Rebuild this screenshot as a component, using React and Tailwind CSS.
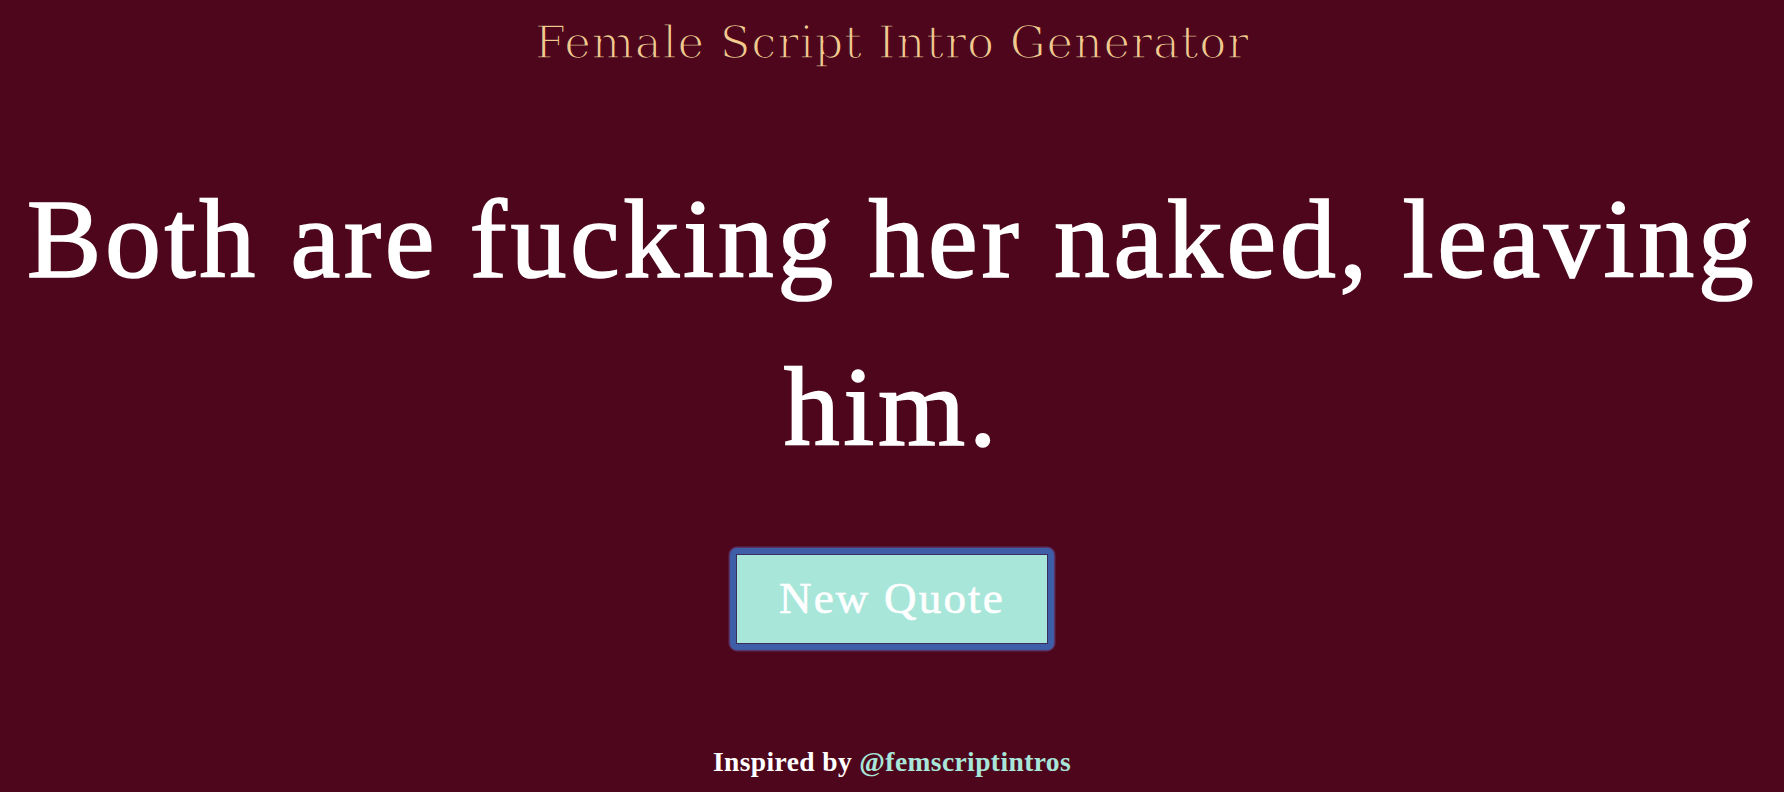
export default function App() {
    return (
        <div className="min-h-screen bg-[#4e061c] flex flex-col items-center text-center">
            {/* Title */}
            <h1 className="pt-[18px] text-[45px] leading-[50px] tracking-[0.7px] text-[#f3ca8e] font-['DejaVu_Serif',serif] [-webkit-text-stroke:1.5px_#4e061c]">
                Female Script Intro Generator
            </h1>

            {/* Quote */}
            <p className="mt-[87px] w-full text-[112px] leading-[168px] tracking-[3.6px] text-white font-['Liberation_Serif',serif] [-webkit-text-stroke:1.6px_white]">
                Both are fucking her naked, leaving him.
            </p>

            {/* Button with focus ring */}
            <div className="mt-[57px] rounded-[7px] bg-[#3f5ea8] p-[6px] shadow-[0_0_0_1.5px_#5b3163]">
                <button className="flex items-center justify-center w-[312px] h-[90px] border border-[#3b2d60] bg-[#a8e6da] text-white text-[45px] tracking-[2.2px] font-['Liberation_Serif',serif] [-webkit-text-stroke:0.6px_white]">
                    New Quote
                </button>
            </div>

            {/* Footer */}
            <p className="mt-[97px] text-[27.5px] leading-[30px] font-bold text-white font-['Liberation_Serif',serif] tracking-[0.4px]">
                Inspired by <a className="text-[#a8e6da]">@femscriptintros</a>
            </p>
        </div>
    );
}
